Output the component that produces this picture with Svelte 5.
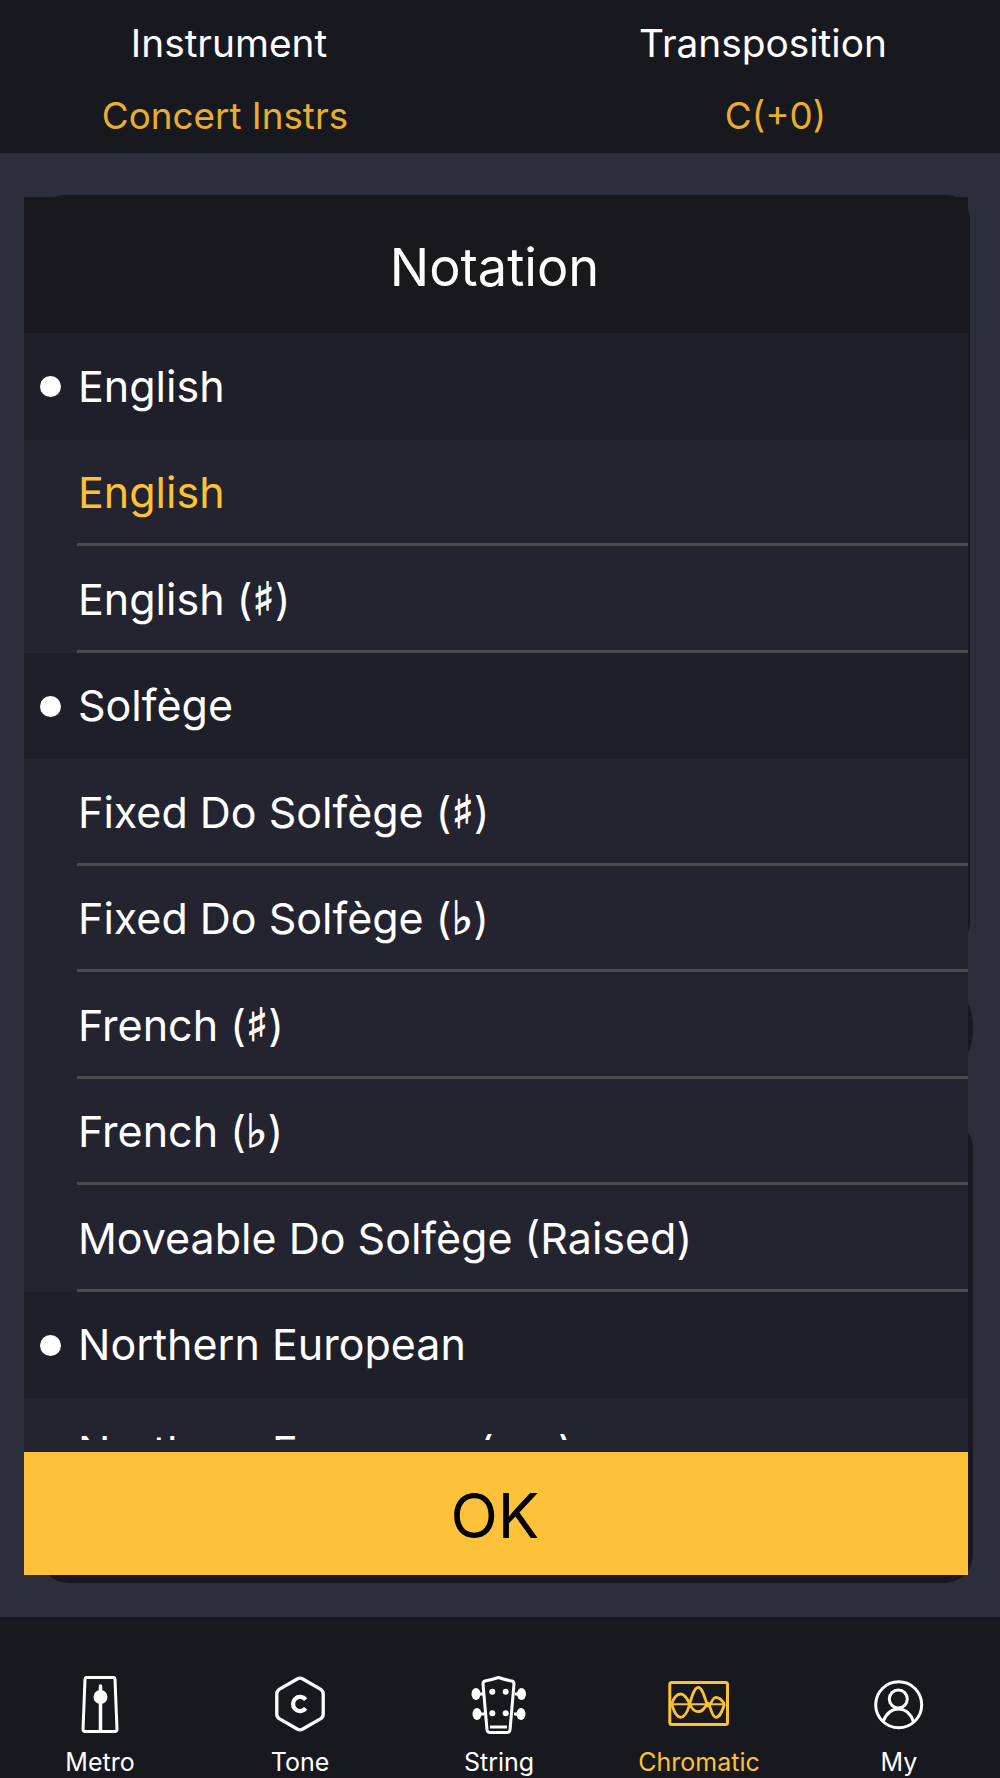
<script>
  const rows = [
    { label: 'English', head: true },
    { label: 'English', active: true, line: true },
    { label: 'English', sym: '♯', line: true },
    { label: 'Solfège', head: true },
    { label: 'Fixed Do Solfège', sym: '♯', line: true },
    { label: 'Fixed Do Solfège', sym: '♭', line: true },
    { label: 'French', sym: '♯', line: true },
    { label: 'French', sym: '♭', line: true },
    { label: 'Moveable Do Solfège (Raised)', line: true },
    { label: 'Northern European', head: true },
    { label: 'Northern European (var)' }
  ];
</script>

<div class="page">
  <header class="top">
    <div class="col left">
      <div class="name">Instrument</div>
      <div class="val">Concert Instrs</div>
    </div>
    <div class="col right">
      <div class="name">Transposition</div>
      <div class="val shift">C(+0)</div>
    </div>
  </header>

  <main class="stage">
    <!-- page content peeking out from behind the dialog -->
    <div class="behind b1"></div>
    <div class="behind b2"></div>
    <div class="behind b3"></div>

    <section class="modal">
      <h1 class="title">Notation</h1>
      <div class="list">
        {#each rows as r}
          <div class="row" class:head={r.head}>
            {#if r.head}<span class="dot"></span>{/if}
            <span class="label" class:active={r.active}>{r.label}{#if r.sym}&nbsp;(<span class="sym">{r.sym}</span>){/if}</span>
            {#if r.line}<span class="line"></span>{/if}
          </div>
        {/each}
      </div>
      <button class="ok">OK</button>
    </section>
  </main>

  <nav class="tabs">
    <div class="tab t1">
      <svg width="40" height="60" viewBox="0 0 40 60" fill="none" stroke="#fff" stroke-width="3">
        <path d="M7 3.500h26a2 2 0 0 1 2 1.900l2 50a2 2 0 0 1-2 2.100H5a2 2 0 0 1-2-2.100L5 5.400a2 2 0 0 1 2-1.900z" stroke-linejoin="round"/>
        <path d="M20.500 12v45" stroke-width="3.500" stroke-linecap="round"/>
        <circle cx="20.500" cy="23" r="7" fill="#fff" stroke="none"/>
      </svg>
      <span>Metro</span>
    </div>
    <div class="tab t2">
      <svg width="54" height="58" viewBox="-1.500 -1.500 57 61" fill="none" stroke="#fff" stroke-width="3.500" stroke-linejoin="round">
        <path d="M24 2.600a6 6 0 0 1 6 0l18.500 10.700a6 6 0 0 1 3 5.200v21a6 6 0 0 1-3 5.200L30 55.400a6 6 0 0 1-6 0L5.500 44.700a6 6 0 0 1-3-5.200v-21a6 6 0 0 1 3-5.200z"/>
        <path d="M33 24.300a7.500 7.500 0 1 0 0 9.400" stroke-width="4.500"/>
      </svg>
      <span>Tone</span>
    </div>
    <div class="tab t3">
      <svg width="56" height="62" viewBox="0 0 56 62" fill="none" stroke="#fff" stroke-width="3" stroke-linejoin="round">
        <path d="M14 6Q20 5 27.500 2.500 35 5 41 6 43 6.500 43 9L39 55Q38.500 57.500 36 57.500H19Q16.500 57.500 16 55L12 9Q12 6.500 14 6z"/>
        <path d="M19 52h17"/>
        <path d="M6 19h6M7 39h6M44 19h6M43 39h6"/>
        <g fill="#fff" stroke="none">
          <ellipse cx="5" cy="19" rx="4.500" ry="6"/>
          <ellipse cx="6" cy="39" rx="4.500" ry="6"/>
          <ellipse cx="50.500" cy="19" rx="4.500" ry="6"/>
          <ellipse cx="50" cy="39" rx="4.500" ry="6"/>
          <circle cx="21.300" cy="16.700" r="3"/>
          <circle cx="34.700" cy="16.700" r="3"/>
          <circle cx="21.300" cy="38.300" r="3"/>
          <circle cx="34.700" cy="38.300" r="3"/>
        </g>
      </svg>
      <span>String</span>
    </div>
    <div class="tab t4 on">
      <svg width="64" height="50" viewBox="0 0 64 50" fill="none" stroke="#fdc134" stroke-width="3">
        <rect x="2.800" y="3.500" width="57.700" height="42" rx="2"/>
        <path d="M4.700 25.300H58" stroke-width="2"/>
        <g stroke-width="2.800">
          <path d="M4.700 25C7 18 10 15 13.700 15S20 19 22.700 25 28 32.700 31.300 32.700 37.500 30 40 25 44 38.300 48.700 38.300 55 32 57.600 25"/>
          <path d="M4.700 25C7 33 10 38.300 13.700 38.300S20.500 33 22.700 25 27.500 8.300 31.300 8.300 37.500 18 40 25 44.500 18.300 48.700 18.300 55 21 57.600 25"/>
        </g>
      </svg>
      <span>Chromatic</span>
    </div>
    <div class="tab t5">
      <svg width="52" height="52" viewBox="0 0 52 52" fill="none" stroke="#fff" stroke-width="3">
        <circle cx="25.700" cy="26.700" r="23"/>
        <circle cx="25.300" cy="21" r="9"/>
        <path d="M10 43.700C13 36 18.500 31 25.500 31S38 36 40.500 43.700"/>
      </svg>
      <span>My</span>
    </div>
  </nav>
</div>

<style>
  :global(body) {
    margin: 0;
    background: #18191f;
  }
  .page {
    width: 1000px;
    height: 1778px;
    display: flex;
    flex-direction: column;
    font-family: Inter, "DejaVu Sans", "Noto Sans", sans-serif;
    color: #fff;
    overflow: hidden;
  }
  .top {
    height: 153px;
    flex: none;
    display: flex;
    background: #18191f;
  }
  .col {
    width: 50%;
    padding-top: 21px;
    text-align: center;
    box-sizing: border-box;
  }
  .col.left { padding-right: 42px; }
  .col.right { padding-left: 26px; }
  .name {
    font-size: 38.800px;
    font-weight: 370;
    line-height: 44px;
  }
  .val {
    margin-top: 29px;
    font-size: 36.800px;
    font-weight: 370;
    line-height: 44px;
    color: #e8ae2f;
  }
  .col.left .val { margin-right: 8px; }
  .val.shift { margin-left: 25px; }
  .stage {
    flex: 1;
    min-height: 0;
    position: relative;
    background: #2c2e3b;
    padding: 44px 32px 42px 24px;
    display: flex;
  }
  .behind {
    position: absolute;
    background: #18191f;
  }
  .b1 { left: 40px; top: 42px; width: 930px; height: 752px; border-radius: 24px; }
  .b2 { left: 953px; top: 846px; width: 20px; height: 58px; border-radius: 50%; }
  .b3 { left: 40px; top: 967px; width: 933px; height: 463px; border-radius: 28px; }
  .modal {
    position: relative;
    flex: 1;
    min-height: 0;
    display: flex;
    flex-direction: column;
    background: #23242f;
  }
  .title {
    margin: 0;
    height: 136px;
    flex: none;
    background: #18181d;
    font-size: 52.300px;
    font-weight: 370;
    line-height: 141px;
    text-align: center;
    padding-right: 3px;
  }
  .list {
    position: relative;
    flex: 1;
    min-height: 0;
    overflow: hidden;
  }
  /* the last row is cut a little above the button in the original */
  .list::after {
    content: "";
    position: absolute;
    left: 0;
    right: 0;
    bottom: 0;
    height: 12px;
    background: #23242f;
  }
  .row {
    position: relative;
    height: 106.500px;
    box-sizing: border-box;
    padding-left: 54px;
    display: flex;
    align-items: center;
    background: #23242f;
    font-size: 43px;
    font-weight: 370;
  }
  .row.head { background: #1e1f28; }
  .label { position: relative; top: -0.5px; }
  .sym {
    font-family: "DejaVu Sans", sans-serif;
    font-weight: 400;
    font-size: 46px;
    line-height: 0;
    -webkit-text-stroke: 0.9px #fff;
  }
  .dot {
    position: absolute;
    left: 16px;
    top: 43px;
    width: 21px;
    height: 21px;
    border-radius: 50%;
    background: #fff;
  }
  .active { color: #fdc134; }
  .line {
    position: absolute;
    left: 53px;
    right: 0;
    bottom: 0;
    height: 3px;
    background: #4b4c4d;
  }
  .ok {
    height: 123px;
    flex: none;
    border: 0;
    padding: 4px 2px 0 0;
    background: #fec13a;
    color: #000;
    font-family: inherit;
    font-size: 62px;
    font-weight: 370;
  }
  .tabs {
    height: 161px;
    flex: none;
    position: relative;
    background: #18191f;
  }
  .tab {
    position: absolute;
    top: 0;
    width: 160px;
    height: 161px;
    display: flex;
    flex-direction: column;
    align-items: center;
  }
  .tab span {
    position: absolute;
    top: 130px;
    font-size: 25px;
    line-height: 30px;
  }
  .tab.on { color: #fdc134; }
  .t1 { left: 20px; }
  .t1 svg { margin-top: 57px; }
  .t2 { left: 220px; }
  .t2 svg { margin-top: 58px; }
  .t3 { left: 419px; }
  .t3 svg { margin-top: 58px; }
  .t4 { left: 619px; }
  .t4 svg { margin-top: 62px; }
  .t5 { left: 819px; }
  .t5 svg { margin-top: 61px; }
</style>
